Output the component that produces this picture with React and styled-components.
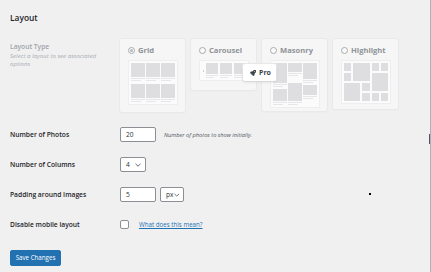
import React from "react";
import styled, { createGlobalStyle } from "styled-components";
import { FaRocket } from "react-icons/fa";

const GlobalStyle = createGlobalStyle`
  html, body { margin: 0; padding: 0; background: #f0f0f1; }
  body { font-family: "Open Sans", "Noto Sans", sans-serif; color: #1d2327; }
`;

const Page = styled.div`
  position: relative;
  box-sizing: border-box;
  width: 431px;
  height: 272px;
  padding: 11px 0 0 10px;
  border-right: 1px solid #a8b3c0;
  overflow: hidden;
`;

const Heading = styled.h2`
  margin: 0 0 14px;
  font-size: 8.4px;
  line-height: 14px;
  font-weight: 600;
  color: #1d2327;
`;

const Rows = styled.div`
  display: flex;
  flex-direction: column;
  gap: 15px;
`;

const Row = styled.div`
  display: grid;
  grid-template-columns: 110px 1fr;
  align-items: ${(p) => (p.$top ? "start" : "center")};
  min-height: 15px;
`;

const Label = styled.div`
  font-size: 6.7px;
  font-weight: 600;
  color: ${(p) => (p.$muted ? "#9ea3a8" : "#1d2327")};
  padding-top: ${(p) => (p.$muted ? "3px" : "0")};
`;

const Hint = styled.div`
  margin-top: 1px;
  font-size: 6.1px;
  line-height: 8px;
  font-style: italic;
  color: #a9adb1;
  width: 92px;
`;

const Field = styled.div`
  display: flex;
  align-items: center;
  gap: ${(p) => p.$gap || 4}px;
`;

const Input = styled.div`
  box-sizing: border-box;
  width: 36px;
  height: 15px;
  padding-left: 5px;
  border: 1px solid #8c8f94;
  border-radius: 2px;
  background: #fff;
  font-size: 6.6px;
  line-height: 13px;
  color: #2c3338;
`;

const Select = styled.div`
  box-sizing: border-box;
  display: flex;
  align-items: center;
  justify-content: space-between;
  width: ${(p) => p.$w}px;
  height: 15px;
  padding: 0 4px 0 5px;
  border: 1px solid #8c8f94;
  border-radius: 2px;
  background: #fff;
  font-size: 6.6px;
  color: #2c3338;
`;

const Desc = styled.span`
  margin-left: 4px;
  font-size: 5.7px;
  font-style: italic;
  color: #50575e;
`;

const Checkbox = styled.div`
  box-sizing: border-box;
  width: 9px;
  height: 9px;
  border: 1px solid #8c8f94;
  border-radius: 2px;
  background: #fff;
`;

const Link = styled.a`
  margin-left: 6px;
  font-size: 6.2px;
  color: #2271b1;
  text-decoration: underline;
`;

const Button = styled.button`
  margin-top: 18px;
  width: 51px;
  height: 16px;
  padding: 0;
  border: 1px solid #2271b1;
  border-radius: 2px;
  background: #2271b1;
  color: #fff;
  font-family: inherit;
  font-size: 6.2px;
  line-height: 14px;
`;

/* layout type cards */

const Cards = styled.div`
  position: relative;
  display: flex;
  align-items: flex-start;
  gap: 6px;
`;

const Card = styled.div`
  box-sizing: border-box;
  width: 65px;
  padding: 7px 8px ${(p) => p.$pb || 7}px;
  background: #f6f6f7;
  border-radius: 2px;
  box-shadow: 0 0 0 1px #e9e9eb, 0 1px 2px rgba(0, 0, 0, 0.05);
`;

const CardHead = styled.div`
  display: flex;
  align-items: center;
  gap: 3px;
  height: 8px;
  margin-bottom: 6px;
  font-size: 7.6px;
  font-weight: 700;
  color: #8f9397;
`;

const Radio = styled.span`
  box-sizing: border-box;
  display: inline-flex;
  align-items: center;
  justify-content: center;
  width: 7px;
  height: 7px;
  border: 1px solid #a7aaad;
  border-radius: 50%;
  background: #fbfbfb;
  &::after {
    content: "";
    width: 3px;
    height: 3px;
    border-radius: 50%;
    background: ${(p) => (p.$on ? "#b5b8bb" : "transparent")};
  }
`;

const Frame = styled.div`
  box-sizing: border-box;
  width: 50px;
  padding: 2px;
  background: #fbfbfb;
  border: 1px solid #eeeeef;
`;

const GridFrame = styled(Frame)`
  display: grid;
  grid-template-columns: repeat(3, 1fr);
  gap: 3px 1px;
`;

const RowFrame = styled(Frame)`
  display: flex;
  align-items: flex-start;
  gap: 2px;
  padding-left: 3px;
  overflow: hidden;
`;

const MasonryFrame = styled(Frame)`
  display: grid;
  grid-template-columns: repeat(3, 1fr);
  gap: 1px;
`;

const MasonryCol = styled.div`
  display: flex;
  flex-direction: column;
  gap: 2px;
`;

const HighlightFrame = styled(Frame)`
  display: grid;
  grid-template-columns: repeat(5, 1fr);
  grid-auto-rows: 8px;
  gap: 2px;
`;

const Block = styled.div`
  grid-column: ${(p) => p.$c || "auto"};
  grid-row: ${(p) => p.$r || "auto"};
  background: #dedee0;
`;

const ThumbWrap = styled.div`
  display: flex;
  flex-direction: column;
  gap: 1px;
  flex: ${(p) => (p.$fixed ? "0 0 12px" : "1")};
`;

const ThumbImg = styled.div`
  height: ${(p) => p.$h}px;
  background: #dedee0;
`;

const Line = styled.div`
  height: 1px;
  width: ${(p) => p.$w || 100}%;
  background: #e6e6e8;
`;

const Arrow = styled.span`
  align-self: center;
  width: 1px;
  height: 2px;
  background: #d0d0d2;
`;

const Pro = styled.div`
  position: absolute;
  left: 123px;
  top: 25px;
  display: flex;
  align-items: center;
  gap: 3px;
  box-sizing: border-box;
  height: 17px;
  padding: 0 5px 0 7px;
  background: #fff;
  border-radius: 2px;
  box-shadow: 0 1px 3px rgba(0, 0, 0, 0.12), 0 0 0 1px #ececee;
  font-size: 7px;
  font-weight: 700;
  color: #3c434a;
  svg { width: 6px; height: 6px; }
`;

const Marker = styled.span`
  position: absolute;
  right: -1px;
  top: 134px;
  width: 2px;
  height: 10px;
  background: #50575e;
`;

const Dot = styled.span`
  position: absolute;
  left: 369px;
  top: 193px;
  width: 1.5px;
  height: 1.5px;
  background: #000;
`;

const Thumb = ({ h, fixed }) => (
  <ThumbWrap $fixed={fixed}>
    <ThumbImg $h={h} />
    <Line />
    <Line $w={70} />
  </ThumbWrap>
);

const highlight = [
  ["1", "1"], ["2 / 4", "1 / 3"], ["4", "1"], ["5", "1"],
  ["1", "2"], ["4 / 6", "2 / 4"], ["1 / 3", "3 / 5"], ["3", "3"],
  ["3", "4"], ["4", "4"], ["5", "4"],
];

export default function App() {
  return (
    <Page>
      <GlobalStyle />
      <Heading>Layout</Heading>
      <Rows>
        <Row $top>
          <div>
            <Label $muted>Layout Type</Label>
            <Hint>Select a layout to see associated options</Hint>
          </div>
          <Cards>
            <Card>
              <CardHead><Radio $on />Grid</CardHead>
              <GridFrame>
                {[0, 1, 2, 3, 4, 5].map((i) => <Thumb key={i} h={14} />)}
              </GridFrame>
            </Card>
            <Card $pb={9}>
              <CardHead><Radio />Carousel</CardHead>
              <RowFrame>
                <Arrow />
                <Thumb h={11} fixed />
                <Thumb h={11} fixed />
                <Thumb h={11} fixed />
              </RowFrame>
            </Card>
            <Card $pb={3}>
              <CardHead><Radio />Masonry</CardHead>
              <MasonryFrame>
                <MasonryCol><Thumb h={20} /><Thumb h={12} /></MasonryCol>
                <MasonryCol><Thumb h={9} /><Thumb h={18} /></MasonryCol>
                <MasonryCol><Thumb h={16} /><Thumb h={10} /></MasonryCol>
              </MasonryFrame>
            </Card>
            <Card $pb={5}>
              <CardHead><Radio />Highlight</CardHead>
              <HighlightFrame>
                {highlight.map(([c, r], i) => <Block key={i} $c={c} $r={r} />)}
              </HighlightFrame>
            </Card>
            <Pro><FaRocket />Pro</Pro>
          </Cards>
        </Row>

        <Row>
          <Label>Number of Photos</Label>
          <Field>
            <Input>20</Input>
            <Desc>Number of photos to show initially.</Desc>
          </Field>
        </Row>

        <Row>
          <Label>Number of Columns</Label>
          <Field>
            <Select $w={26}>4<Chevron /></Select>
          </Field>
        </Row>

        <Row>
          <Label>Padding around Images</Label>
          <Field>
            <Input>5</Input>
            <Select $w={24}>px<Chevron /></Select>
          </Field>
        </Row>

        <Row>
          <Label>Disable mobile layout</Label>
          <Field $gap={4}>
            <Checkbox />
            <Link href="#">What does this mean?</Link>
          </Field>
        </Row>
      </Rows>
      <Button>Save Changes</Button>
      <Marker />
      <Dot />
    </Page>
  );
}

function Chevron() {
  return (
    <svg width="6" height="4" viewBox="0 0 6 4">
      <polyline points="0.5,0.8 3,3.2 5.5,0.8" fill="none" stroke="#50575e" strokeWidth="0.9" />
    </svg>
  );
}
